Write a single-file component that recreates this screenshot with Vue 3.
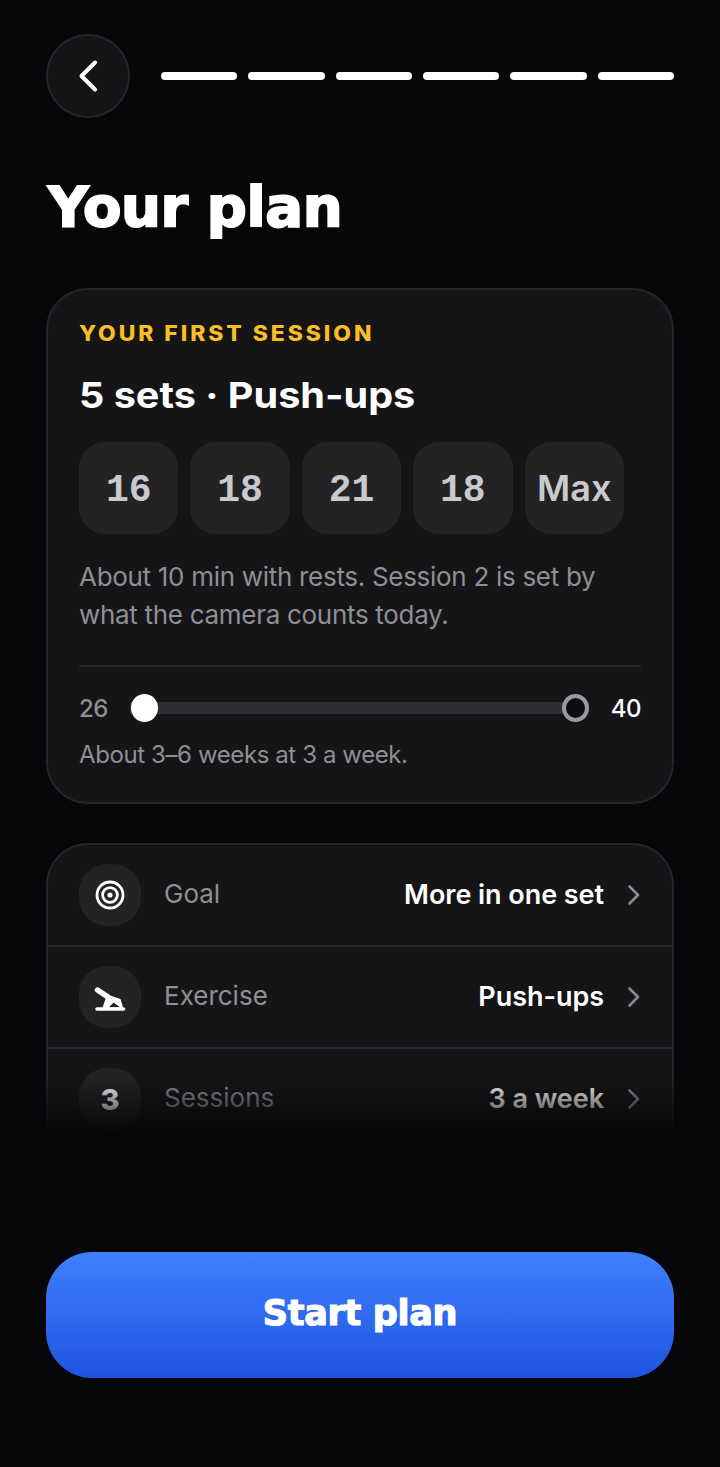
<template>
  <div class="screen">
    <div class="top">
      <button class="back">
        <svg width="26" height="34" viewBox="0 0 26 34" fill="none">
          <path d="M20 3.5 L6.5 17 L20 30.5" stroke="#fff" stroke-width="4" stroke-linecap="round" stroke-linejoin="round" />
        </svg>
      </button>
      <div class="steps">
        <span v-for="n in 6" :key="n" class="step"></span>
      </div>
    </div>

    <h1 class="title">Your plan</h1>

    <div class="card">
      <div class="eyebrow">YOUR FIRST SESSION</div>
      <div class="headline">5 sets · Push-ups</div>
      <div class="sets">
        <div v-for="(s, i) in sets" :key="i" :class="['set', { mono: s !== 'Max' }]">{{ s }}</div>
      </div>
      <p class="note">About 10 min with rests. Session 2 is set by<br />what the camera counts today.</p>
      <div class="divider"></div>
      <div class="range">
        <span class="range-from">26</span>
        <div class="track">
          <span class="knob"></span>
          <span class="knob-end"></span>
        </div>
        <span class="range-to">40</span>
      </div>
      <div class="weeks">About 3–6 weeks at 3 a week.</div>
    </div>

    <div class="list-wrap">
      <div class="list">
        <div v-for="row in rows" :key="row.label" class="row">
          <div class="row-icon">
            <svg v-if="row.icon === 'target'" width="30" height="30" viewBox="0 0 30 30" fill="none">
              <circle cx="15" cy="15" r="13" stroke="#fff" stroke-width="2.8" />
              <circle cx="15" cy="15" r="7.4" stroke="#fff" stroke-width="2.8" />
              <circle cx="15" cy="15" r="2.6" fill="#fff" />
            </svg>
            <svg v-else-if="row.icon === 'pushup'" width="32" height="28" viewBox="0 0 32 28" fill="none">
              <path d="M3 26 H29.5" stroke="#fff" stroke-width="3.6" stroke-linecap="round" />
              <path d="M3.5 7 L14 14" stroke="#fff" stroke-width="5.4" stroke-linecap="round" />
              <path fill="#fff" fill-rule="evenodd" d="M13 11.5 L26.5 16 L29.5 26 L8 26 Z M15 24.2 L26 24.2 L19.5 19.5 Z" />
            </svg>
            <span v-else class="row-num">{{ row.icon }}</span>
          </div>
          <span class="row-label">{{ row.label }}</span>
          <span class="row-value">{{ row.value }}</span>
          <svg class="chev" width="14" height="22" viewBox="0 0 14 22" fill="none">
            <path d="M2.5 2.5 L11 11 L2.5 19.5" stroke="#8b8b90" stroke-width="2.6" stroke-linecap="round" stroke-linejoin="round" />
          </svg>
        </div>
      </div>
      <div class="fade"></div>
    </div>

    <button class="cta">Start plan</button>
  </div>
</template>

<script setup>
const sets = ['16', '18', '21', '18', 'Max']

const rows = [
  { icon: 'target', label: 'Goal', value: 'More in one set' },
  { icon: 'pushup', label: 'Exercise', value: 'Push-ups' },
  { icon: '3', label: 'Sessions', value: '3 a week' }
]
</script>

<style>
html,
body {
  background: #07070a;
}
</style>

<style scoped>
.screen {
  width: 720px;
  height: 1467px;
  box-sizing: border-box;
  padding: 34px 46px 0;
  background: #07070a;
  font-family: 'Inter', 'Liberation Sans', sans-serif;
  color: #fff;
  overflow: hidden;
}

.top {
  display: flex;
  align-items: center;
  gap: 31px;
}

.back {
  width: 84px;
  height: 84px;
  flex: none;
  padding: 0;
  display: flex;
  align-items: center;
  justify-content: center;
  background: #151518;
  border: 2px solid #26262a;
  border-radius: 50%;
  box-sizing: border-box;
}

.steps {
  flex: 1;
  display: flex;
  gap: 11px;
}

.step {
  flex: 1;
  height: 8px;
  border-radius: 4px;
  background: #fff;
}

.title {
  margin: 55px 0 0;
  padding-left: 2px;
  font-family: 'DejaVu Sans', sans-serif;
  font-size: 56px;
  line-height: 68px;
  font-weight: 700;
  letter-spacing: -0.4px;
  -webkit-text-stroke: 2px #fff;
}

.card {
  margin-top: 47px;
  height: 516px;
  box-sizing: border-box;
  padding: 32px 31px 0;
  background: #151518;
  border: 2px solid #26262a;
  border-radius: 42px;
}

.eyebrow {
  font-size: 21px;
  line-height: 24px;
  font-weight: 800;
  letter-spacing: 2.7px;
  color: #fbbf24;
  transform: scaleX(1.09);
  transform-origin: left center;
}

.headline {
  margin-top: 28px;
  font-size: 36px;
  line-height: 42px;
  font-weight: 700;
  transform: scaleX(1.1);
  transform-origin: left center;
}

.sets {
  margin-top: 26px;
  display: flex;
  gap: 12px;
}

.set {
  width: 99.4px;
  height: 92px;
  display: flex;
  align-items: center;
  justify-content: center;
  background: #232326;
  border-radius: 26px;
  font-size: 36px;
  font-weight: 600;
  color: #c9c9ce;
}

.set.mono {
  box-sizing: border-box;
  padding-top: 4px;
  font-family: 'Liberation Mono', monospace;
  font-size: 38px;
  font-weight: 700;
}

.note {
  margin: 24px 0 0;
  font-size: 26px;
  line-height: 38px;
  color: #8f8f94;
  letter-spacing: -0.3px;
}

.divider {
  margin-top: 31px;
  height: 2px;
  background: #26262a;
}

.range {
  margin-top: 27px;
  height: 28px;
  display: flex;
  align-items: center;
}

.range-from,
.range-to {
  font-size: 24px;
  font-weight: 500;
  letter-spacing: -0.5px;
}

.range-from {
  width: 52px;
  color: #8f8f94;
}

.range-to {
  margin-left: 23px;
  color: #fff;
}

.track {
  position: relative;
  flex: none;
  width: 458px;
  height: 12px;
  background: #2e2e32;
}

.knob,
.knob-end {
  position: absolute;
  top: -8px;
  width: 27px;
  height: 28px;
  box-sizing: border-box;
  border-radius: 50%;
}

.knob {
  left: 1px;
  background: #fff;
}

.knob-end {
  right: -1px;
  background: #0d0d10;
  border: 4px solid #9a9a9e;
}

.weeks {
  margin-top: 17px;
  font-size: 24px;
  line-height: 32px;
  color: #8f8f94;
  letter-spacing: -0.4px;
}

.list-wrap {
  position: relative;
  margin-top: 39px;
  height: 292px;
  overflow: hidden;
}

.list {
  background: #151518;
  border: 2px solid #26262a;
  border-radius: 42px;
  height: 400px;
  box-sizing: border-box;
}

.row {
  height: 102px;
  box-sizing: border-box;
  padding: 0 31px;
  display: flex;
  align-items: center;
  border-bottom: 2px solid #26262a;
}

.row-icon {
  width: 62px;
  height: 62px;
  flex: none;
  display: flex;
  align-items: center;
  justify-content: center;
  background: #232326;
  border-radius: 28px;
}

.row-num {
  font-size: 29px;
  font-weight: 800;
  color: #fff;
}

.row-label {
  margin-left: 23px;
  padding-bottom: 3px;
  font-size: 26px;
  color: #8f8f94;
}

.row-value {
  margin-left: auto;
  padding-bottom: 1px;
  font-size: 27px;
  font-weight: 600;
  letter-spacing: -0.05px;
}

.chev {
  margin-left: 23px;
}

.fade {
  position: absolute;
  left: 0;
  right: 0;
  bottom: 0;
  height: 60px;
  background: linear-gradient(to bottom, rgba(7, 7, 10, 0), #07070a);
  pointer-events: none;
}

.cta {
  display: block;
  width: 100%;
  height: 126px;
  margin-top: 117px;
  padding: 0 0 4px;
  border: none;
  border-radius: 46px;
  background: linear-gradient(to bottom, #3f80ff, #1f54e0);
  color: #fff;
  font-family: 'DejaVu Sans', sans-serif;
  font-size: 35px;
  font-weight: 700;
  letter-spacing: -0.3px;
  -webkit-text-stroke: 1.2px #fff;
}
</style>
